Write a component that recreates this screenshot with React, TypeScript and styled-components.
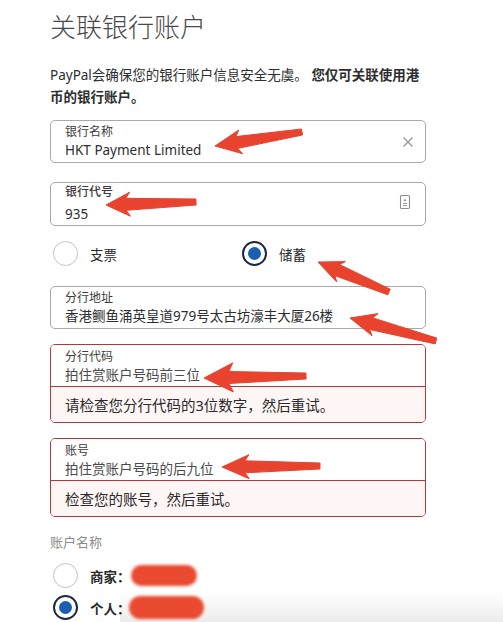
import styled, { createGlobalStyle } from "styled-components";

const GlobalStyle = createGlobalStyle`
  html, body {
    margin: 0;
    padding: 0;
    background: #fff;
  }
  body {
    font-family: "Noto Sans", "Noto Sans CJK SC", sans-serif;
    color: #2c2e2f;
  }
`;

const Page = styled.div`
  position: relative;
  isolation: isolate;
  width: 503px;
  height: 622px;
  overflow: hidden;
  box-sizing: border-box;
  padding: 0 77px 0 50px;
`;

const Title = styled.h1`
  margin: 10px 0 0;
  font-size: 26px;
  line-height: 32px;
  font-weight: 300;
  color: #4a4a4a;
  font-family: "Noto Sans CJK SC", sans-serif;
`;

const Intro = styled.p`
  margin: 22px 0 0;
  font-size: 13.5px;
  line-height: 22px;
  color: #2c2e2f;

  b {
    font-weight: 700;
  }
`;

const Field = styled.div<{ $top: number; $spread?: boolean }>`
  margin-top: ${(p) => p.$top}px;
  box-sizing: border-box;
  height: ${(p) => (p.$spread ? 44 : 43)}px;
  border: 1px solid #a9a9a9;
  border-radius: 5px;
  padding: 0 11px 0 14px;
  display: flex;
  align-items: center;
  gap: 8px;
  background: #fff;
`;

const FieldText = styled.div<{ $spread?: boolean }>`
  flex: 1;
  display: flex;
  flex-direction: column;
  gap: ${(p) => (p.$spread ? 6 : 2)}px;
  padding-top: ${(p) => (p.$spread ? 0 : 1)}px;
`;

const Label = styled.span<{ $strong?: boolean }>`
  font-size: 12px;
  line-height: 14px;
  color: #3c3c3c;
  font-weight: ${(p) => (p.$strong ? 500 : 400)};
`;

const Value = styled.span<{ $muted?: boolean }>`
  font-size: 13.5px;
  line-height: 18px;
  color: ${(p) => (p.$muted ? "#4a4a4a" : "#2c2e2f")};
`;

const RadioRow = styled.div`
  margin-top: 15px;
  display: grid;
  grid-template-columns: 189px 1fr;
  padding-left: 3px;
`;

const RadioItem = styled.label<{ $bold?: boolean }>`
  display: flex;
  align-items: center;
  gap: 12px;
  height: 25px;
  font-size: 13.5px;
  color: #2a2a2a;
  font-weight: ${(p) => (p.$bold ? 600 : 400)};
`;

const Circle = styled.span<{ $on?: boolean }>`
  box-sizing: border-box;
  width: 25px;
  height: 25px;
  flex: none;
  border-radius: 50%;
  background: #fff;
  border: ${(p) => (p.$on ? "2px solid #1b2a3f" : "1px solid #c4c4c4")};
  display: flex;
  align-items: center;
  justify-content: center;

  &::after {
    content: "";
    display: ${(p) => (p.$on ? "block" : "none")};
    width: 13px;
    height: 13px;
    border-radius: 50%;
    background: #1c5fae;
  }
`;

const ErrorField = styled.div`
  margin-top: 15px;
  border: 1px solid #b8363b;
  border-radius: 5px;
  overflow: hidden;
`;

const ErrorTop = styled.div`
  height: 42px;
  box-sizing: border-box;
  padding: 5px 14px 0;
  display: flex;
  flex-direction: column;
  gap: 2px;
  border-bottom: 1px solid #b8363b;
  background: #fff;
`;

const ErrorMsg = styled.div`
  height: 35px;
  display: flex;
  align-items: center;
  padding: 0 14px;
  background: #fdf6f5;
  font-size: 14.5px;
  color: #2a2a2a;
`;

const SectionLabel = styled.div`
  margin-top: 16px;
  font-size: 13px;
  line-height: 18px;
  color: #8c8c8c;
`;

const NameList = styled.div`
  margin-top: 12px;
  display: flex;
  flex-direction: column;
  gap: 7px;
  padding-left: 3px;
`;

const Redact = styled.span<{ $w: number; $h: number; $pull: number }>`
  display: inline-block;
  width: ${(p) => p.$w}px;
  height: ${(p) => p.$h}px;
  margin-left: ${(p) => p.$pull}px;
  border-radius: 12px;
  background: #ea4a30;
  filter: blur(1.5px);
`;

const BottomFade = styled.div`
  position: absolute;
  z-index: -1;
  left: 120px;
  right: 0;
  bottom: 0;
  height: 30px;
  background: linear-gradient(to bottom, rgba(255, 255, 255, 0), #ececec);
`;

const Overlay = styled.svg`
  position: absolute;
  inset: 0;
  pointer-events: none;
`;

const ClearIcon = () => (
  <svg width="12" height="12" viewBox="0 0 12 12">
    <path d="M1.5 1.5 L10.5 10.5 M10.5 1.5 L1.5 10.5" stroke="#8f8f8f" strokeWidth="1.1" fill="none" />
  </svg>
);

const CheckIcon = () => (
  <svg width="12" height="16" viewBox="0 0 12 16" style={{ marginRight: 3, marginTop: -4 }}>
    <rect x="1.5" y="1.5" width="9" height="13" rx="1.2" stroke="#8f8f8f" strokeWidth="1.1" fill="none" />
    <path d="M6 4.5 L7.6 7 L4.4 7 Z" fill="#9a9a9a" />
    <path d="M4 9.5 H8 M4 11.5 H8" stroke="#9a9a9a" strokeWidth="1" />
  </svg>
);

type Arrow = { tail: [number, number]; tip: [number, number]; len: number; w: number };

const arrows: Arrow[] = [
  { tail: [302, 132], tip: [215, 146], len: 22, w: 24 },
  { tail: [196, 202], tip: [106, 205], len: 20, w: 24 },
  { tail: [389, 292], tip: [318, 262], len: 21, w: 22 },
  { tail: [436, 341], tip: [350, 318], len: 22, w: 23 },
  { tail: [306, 376], tip: [204, 378], len: 25, w: 29 },
  { tail: [320, 466], tip: [222, 467], len: 23, w: 24 },
];

function arrowPoints({ tail, tip, len, w }: Arrow) {
  const dx = tip[0] - tail[0];
  const dy = tip[1] - tail[1];
  const L = Math.hypot(dx, dy);
  const ux = dx / L;
  const uy = dy / L;
  const nx = -uy;
  const ny = ux;
  const neck = [tip[0] - ux * len, tip[1] - uy * len];
  const barb = [tip[0] - ux * (len + 4), tip[1] - uy * (len + 4)];
  const pts = [
    [tail[0] + nx * 3, tail[1] + ny * 3],
    [neck[0] + nx * 6, neck[1] + ny * 6],
    [barb[0] + nx * (w / 2), barb[1] + ny * (w / 2)],
    tip,
    [barb[0] - nx * (w / 2), barb[1] - ny * (w / 2)],
    [neck[0] - nx * 6, neck[1] - ny * 6],
    [tail[0] - nx * 3, tail[1] - ny * 3],
  ];
  return pts.map((p) => `${p[0].toFixed(1)},${p[1].toFixed(1)}`).join(" ");
}

export default function App() {
  return (
    <>
      <GlobalStyle />
      <Page>
        <BottomFade />
        <Title>关联银行账户</Title>
        <Intro>
          PayPal会确保您的银行账户信息安全无虞。 <b>您仅可关联使用港币的银行账户。</b>
        </Intro>

        <Field $top={12}>
          <FieldText>
            <Label>银行名称</Label>
            <Value>HKT Payment Limited</Value>
          </FieldText>
          <ClearIcon />
        </Field>

        <Field $top={19} $spread>
          <FieldText $spread>
            <Label $strong>银行代号</Label>
            <Value>935</Value>
          </FieldText>
          <CheckIcon />
        </Field>

        <RadioRow>
          <RadioItem>
            <Circle />
            支票
          </RadioItem>
          <RadioItem>
            <Circle $on />
            储蓄
          </RadioItem>
        </RadioRow>

        <Field $top={20}>
          <FieldText>
            <Label>分行地址</Label>
            <Value>香港鲗鱼涌英皇道979号太古坊濠丰大厦26楼</Value>
          </FieldText>
        </Field>

        <ErrorField>
          <ErrorTop>
            <Label>分行代码</Label>
            <Value $muted>拍住赏账户号码前三位</Value>
          </ErrorTop>
          <ErrorMsg>请检查您分行代码的3位数字，然后重试。</ErrorMsg>
        </ErrorField>

        <ErrorField>
          <ErrorTop>
            <Label>账号</Label>
            <Value $muted>拍住赏账户号码的后九位</Value>
          </ErrorTop>
          <ErrorMsg>检查您的账号，然后重试。</ErrorMsg>
        </ErrorField>

        <SectionLabel>账户名称</SectionLabel>
        <NameList>
          <RadioItem $bold>
            <Circle />
            <span>商家：</span>
            <Redact $w={66} $h={21} $pull={-12} />
          </RadioItem>
          <RadioItem $bold>
            <Circle $on />
            <span>个人：</span>
            <Redact $w={75} $h={23} $pull={-14} />
          </RadioItem>
        </NameList>

        <Overlay width="503" height="622" viewBox="0 0 503 622">
          {arrows.map((a, i) => (
            <polygon key={i} points={arrowPoints(a)} fill="#e8432e" stroke="#e8432e" strokeWidth="1" strokeLinejoin="round" />
          ))}
        </Overlay>
      </Page>
    </>
  );
}
